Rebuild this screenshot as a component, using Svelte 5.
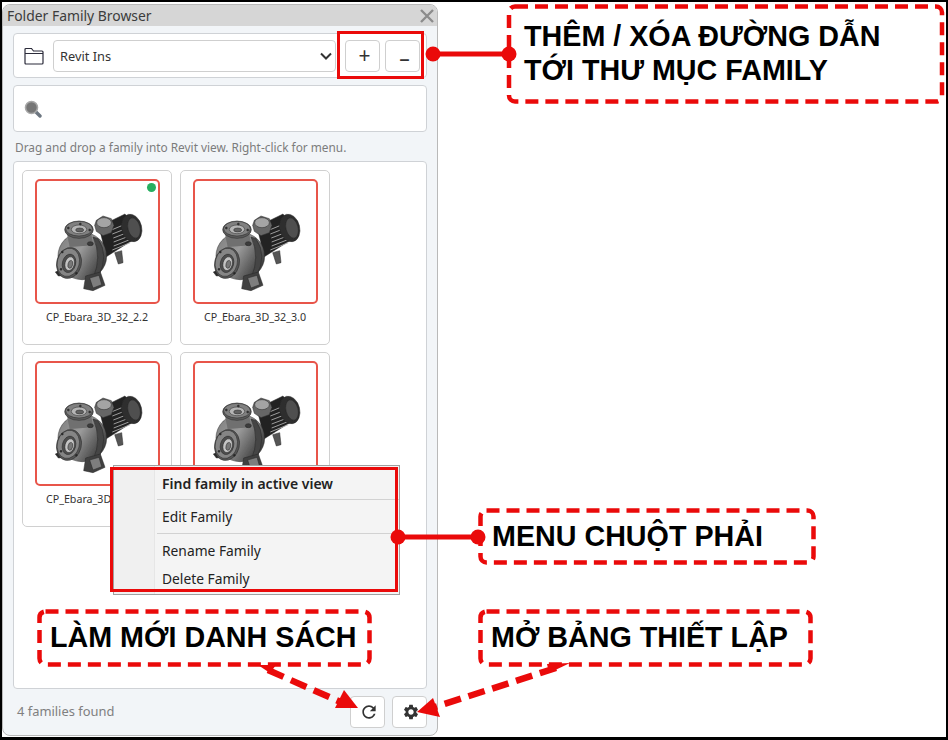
<script lang="ts">
  const families = [
    { name: 'CP_Ebara_3D_32_2.2', loaded: true },
    { name: 'CP_Ebara_3D_32_3.0', loaded: false },
    { name: 'CP_Ebara_3D_32_3.7', loaded: false },
    { name: 'CP_Ebara_3D_32_4.0', loaded: false }
  ];
</script>

<svg class="defs" width="0" height="0" aria-hidden="true">
  <defs>
    <linearGradient id="volute" x1="0" y1="0" x2="1" y2="0.6">
      <stop offset="0" stop-color="#7d7d7d" />
      <stop offset="0.5" stop-color="#9a9a9a" />
      <stop offset="1" stop-color="#3e3e3e" />
    </linearGradient>
    <filter id="soft" x="-5%" y="-5%" width="110%" height="110%">
      <feGaussianBlur stdDeviation="0.9" />
    </filter>
    <symbol id="pump" viewBox="0 0 330 300">
      <g filter="url(#soft)" stroke="#262626" stroke-width="1.5">
        <path d="M215 182 L236 176 L240 212 L226 216 Z" fill="#555" />
        <path d="M168 104 L246 66 L292 130 L190 194 Z" fill="#222" />
        <g stroke="#b0b0b0" stroke-width="2.6">
          <path d="M205 114 L258 92" />
          <path d="M208 126 L264 104" />
          <path d="M211 138 L268 116" />
          <path d="M212 150 L270 128" />
          <path d="M212 162 L268 140" />
          <path d="M208 174 L262 152" />
        </g>
        <ellipse cx="266" cy="108" rx="30" ry="42" transform="rotate(-14 266 108)" fill="#2e2e2e" />
        <ellipse cx="273" cy="108" rx="18" ry="31" transform="rotate(-14 273 108)" fill="#505050" />
        <path d="M160 85 L180 72 L205 80 L213 100 L205 122 L180 131 L160 118 L155 100 Z" fill="#666" />
        <ellipse cx="183" cy="92" rx="22" ry="15" fill="#a4a4a4" />
        <ellipse cx="118" cy="192" rx="73" ry="71" fill="url(#volute)" />
        <path d="M165 140 Q200 190 165 255 L150 258 Q178 195 150 135 Z" fill="#444" />
        <path d="M72 125 L145 125 L150 160 L80 165 Z" fill="#6f6f6f" stroke="none" />
        <ellipse cx="108" cy="113" rx="43" ry="26" fill="#5a5a5a" />
        <ellipse cx="108" cy="110" rx="40" ry="22" fill="#808080" />
        <ellipse cx="108" cy="112" rx="23" ry="13" fill="#b5b5b5" />
        <ellipse cx="110" cy="114" rx="12" ry="6" fill="#626262" />
        <circle cx="76" cy="108" r="3" fill="#333" />
        <circle cx="112" cy="96" r="3" fill="#333" />
        <circle cx="140" cy="114" r="3" fill="#333" />
        <ellipse cx="142" cy="155" rx="9" ry="6" fill="#3c3c3c" />
        <path d="M128 252 L172 240 L186 280 L150 296 L122 290 Z" fill="#404040" />
        <path d="M140 258 L168 250 L176 278 L150 288 Z" fill="#7e7e7e" />
        <path d="M37 240 L60 230 L72 250 L46 252 Z" fill="#2a2a2a" />
        <ellipse cx="78" cy="213" rx="37" ry="47" transform="rotate(14 78 213)" fill="#555" />
        <ellipse cx="76" cy="211" rx="33" ry="43" transform="rotate(14 76 211)" fill="#858585" />
        <ellipse cx="78" cy="214" rx="20" ry="28" transform="rotate(14 78 214)" fill="#4e4e4e" />
        <ellipse cx="80" cy="215" rx="14" ry="21" transform="rotate(14 80 215)" fill="#c4c4c4" />
        <ellipse cx="82" cy="217" rx="7" ry="12" transform="rotate(14 82 217)" fill="#787878" />
        <circle cx="58" cy="180" r="3" fill="#2a2a2a" />
        <circle cx="54" cy="232" r="3" fill="#2a2a2a" />
        <circle cx="100" cy="244" r="3" fill="#2a2a2a" />
      </g>
    </symbol>
  </defs>
</svg>

<div class="screen">
  <section class="window">
    <header class="titlebar">
      <span class="title">Folder Family Browser</span>
      <svg class="close" viewBox="0 0 14 14" width="14" height="14">
        <path d="M1 1 L13 13 M13 1 L1 13" stroke="#8c8c8c" stroke-width="2.4" fill="none" />
      </svg>
    </header>

    <div class="body">
      <div class="box path-row">
        <svg class="folder" viewBox="0 0 20 18" width="20" height="18">
          <path
            d="M1 16 V2.5 Q1 1.5 2 1.5 H7.5 L9.5 4 H18 Q19 4 19 5 V16 Q19 17 18 17 H2 Q1 17 1 16 Z M1 6.5 H19"
            fill="none"
            stroke="#2b2b3a"
            stroke-width="1.2"
          />
        </svg>
        <div class="select">
          <span>Revit Ins</span>
          <svg viewBox="0 0 12 8" width="12" height="8">
            <path d="M1 1.5 L6 6.5 L11 1.5" fill="none" stroke="#333" stroke-width="2" />
          </svg>
        </div>
        <button class="btn btn-op">+</button>
        <button class="btn btn-op btn-minus">–</button>
      </div>

      <div class="box search">
        <svg viewBox="0 0 18 18" width="18" height="18">
          <path d="M11 11 L16 16" stroke="#6d7680" stroke-width="3.4" stroke-linecap="round" />
          <circle cx="7.5" cy="7.5" r="6" fill="#767676" stroke="#a8a8a8" stroke-width="1.6" />
        </svg>
      </div>

      <p class="hint">Drag and drop a family into Revit view. Right-click for menu.</p>

      <div class="box list">
        {#each families as family}
          <article class="card">
            <div class="thumb">
              {#if family.loaded}<span class="dot"></span>{/if}
              <svg width="110" height="100"><use href="#pump" /></svg>
            </div>
            <div class="card-name">{family.name}</div>
          </article>
        {/each}
      </div>

      <footer class="footer">
        <span class="count">4 families found</span>
        <button class="btn" aria-label="Refresh">
          <svg class="tool-icon" viewBox="0 0 24 24" width="20" height="20">
            <path
              fill="#333"
              d="M17.65 6.35C16.2 4.9 14.21 4 12 4c-4.42 0-7.99 3.58-7.99 8s3.57 8 7.99 8c3.73 0 6.84-2.55 7.73-6h-2.08c-.82 2.33-3.04 4-5.65 4-3.31 0-6-2.69-6-6s2.69-6 6-6c1.66 0 3.14.69 4.22 1.78L13 11h7V4l-2.35 2.35z"
            />
          </svg>
        </button>
        <button class="btn" aria-label="Settings">
          <svg class="tool-icon" viewBox="0 0 24 24" width="18" height="18">
            <path
              fill="#333"
              d="M19.14 12.94c.04-.3.06-.61.06-.94 0-.32-.02-.64-.07-.94l2.03-1.58c.18-.14.23-.41.12-.61l-1.92-3.32c-.12-.22-.37-.29-.59-.22l-2.39.96c-.5-.38-1.03-.7-1.62-.94l-.36-2.54c-.04-.24-.24-.41-.48-.41h-3.84c-.24 0-.43.17-.47.41l-.36 2.54c-.59.24-1.13.57-1.62.94l-2.39-.96c-.22-.08-.47 0-.59.22L2.74 8.87c-.12.21-.08.47.12.61l2.03 1.58c-.05.3-.09.63-.09.94s.02.64.07.94l-2.03 1.58c-.18.14-.23.41-.12.61l1.92 3.32c.12.22.37.29.59.22l2.39-.96c.5.38 1.03.7 1.62.94l.36 2.54c.05.24.24.41.48.41h3.84c.24 0 .44-.17.47-.41l.36-2.54c.59-.24 1.13-.56 1.62-.94l2.39.96c.22.08.47 0 .59-.22l1.92-3.32c.12-.22.07-.47-.12-.61l-2.01-1.58zM12 15.6c-1.98 0-3.6-1.62-3.6-3.6s1.62-3.6 3.6-3.6 3.6 1.62 3.6 3.6-1.62 3.6-3.6 3.6z"
            />
          </svg>
        </button>
      </footer>
    </div>
  </section>

  <div class="menu">
    <div class="menu-item strong">Find family in active view</div>
    <div class="menu-sep"></div>
    <div class="menu-item">Edit Family</div>
    <div class="menu-sep"></div>
    <div class="menu-item">Rename Family</div>
    <div class="menu-item">Delete Family</div>
  </div>

  <!-- annotation layer drawn on top of the screenshot -->
  <svg class="marks" width="948" height="740" viewBox="0 0 948 740">
    <g fill="none" stroke="#ea0a0a">
      <rect x="338.5" y="32.5" width="84" height="45" stroke-width="3" />
      <rect x="111.5" y="468.5" width="285" height="122" stroke-width="3" />
      <g stroke-width="4.5" stroke-dasharray="13 7">
        <rect x="509" y="6.5" width="433" height="95" rx="6" />
        <rect x="480.5" y="510.5" width="333" height="52" rx="6" />
        <rect x="39.5" y="611.5" width="330" height="53" rx="6" />
        <rect x="480.5" y="611.5" width="330" height="53" rx="6" />
      </g>
      <path d="M433 54 H509 M398 537 H478" stroke-width="5" />
      <g stroke-width="6.5" stroke-dasharray="17 8">
        <path d="M268 670 L345 704" />
        <path d="M556 668 L435 707" />
      </g>
    </g>
    <g fill="#ea0a0a">
      <circle cx="433" cy="54" r="7.5" />
      <circle cx="509" cy="54" r="7.5" />
      <circle cx="398" cy="537" r="7.5" />
      <circle cx="478" cy="537" r="7.5" />
      <path d="M358 708 L344 690 L335 708 Z" />
      <path d="M417 712 L433 698 L440 717 Z" />
      <path d="M258 665 L276 665 L270 673 Z" />
      <path d="M570 663 L547 664 L549 673 Z" />
    </g>
  </svg>

  <div class="note note-path">THÊM / XÓA ĐƯỜNG DẪN<br />TỚI THƯ MỤC FAMILY</div>
  <div class="note note-menu">MENU CHUỘT PHẢI</div>
  <div class="note note-refresh">LÀM MỚI DANH SÁCH</div>
  <div class="note note-settings">MỞ BẢNG THIẾT LẬP</div>
</div>

<style>
  :global(body) {
    background: #fff;
  }

  .defs {
    position: absolute;
  }

  .screen {
    position: relative;
    box-sizing: border-box;
    width: 948px;
    height: 740px;
    border-style: solid;
    border-color: #000;
    border-width: 2px 2px 3px 2px;
    background: #fff;
    overflow: hidden;
    font-family: 'Noto Sans', sans-serif;
  }

  .window {
    box-sizing: border-box;
    display: flex;
    flex-direction: column;
    width: 436px;
    height: 732px;
    margin-top: 2px;
    background: #f2f5f8;
    border: 1px solid #b9b9b9;
    border-radius: 8px;
    overflow: hidden;
  }

  .titlebar {
    display: flex;
    align-items: center;
    justify-content: space-between;
    flex: none;
    height: 21px;
    padding: 0 3px 0 4px;
    background: #d6d6d6;
  }

  .title {
    font-size: 13.9px;
    color: #3c3c3c;
  }

  .body {
    display: flex;
    flex-direction: column;
    flex: 1;
    min-height: 0;
    padding: 7px 10px 0;
  }

  .box {
    box-sizing: border-box;
    background: #fff;
    border: 1px solid #cfd2d6;
    border-radius: 4px;
  }

  .path-row {
    display: flex;
    align-items: center;
    flex: none;
    height: 45px;
    padding: 0 6px 0 10px;
  }

  .folder {
    flex: none;
    margin-right: 9px;
  }

  .select {
    display: flex;
    align-items: center;
    justify-content: space-between;
    box-sizing: border-box;
    width: 285px;
    height: 32px;
    margin-right: 9px;
    padding: 0 3px 0 6px;
    border: 1px solid #cfcfcf;
    border-radius: 4px;
    font-size: 12.8px;
    color: #333;
  }

  .btn {
    display: flex;
    align-items: center;
    justify-content: center;
    flex: none;
    box-sizing: border-box;
    width: 35px;
    height: 32px;
    padding: 0;
    background: #fff;
    border: 1px solid #cfcfcf;
    border-radius: 4px;
    font-family: inherit;
    color: #333;
  }

  .btn-op {
    padding-left: 4px;
    font-size: 21px;
    line-height: 1;
  }

  .btn-op + .btn-op {
    margin-left: 5px;
  }

  .btn-minus {
    padding-top: 5px;
  }

  .search {
    display: flex;
    align-items: center;
    flex: none;
    height: 47px;
    margin-top: 7px;
    padding: 0 10px;
  }

  .hint {
    flex: none;
    margin: 0;
    height: 29px;
    padding-left: 2px;
    font-size: 11.85px;
    line-height: 31px;
    color: #7c7c7c;
  }

  .list {
    display: grid;
    grid-template-columns: repeat(auto-fill, 150px);
    grid-auto-rows: 175px;
    align-content: start;
    gap: 7px 8px;
    flex: 1;
    min-height: 0;
    padding: 8px;
  }

  .card {
    box-sizing: border-box;
    padding: 8px 12px;
    background: #fff;
    border: 1px solid #d0d0d0;
    border-radius: 5px;
  }

  .thumb {
    position: relative;
    display: flex;
    align-items: center;
    justify-content: center;
    box-sizing: border-box;
    width: 125px;
    height: 125px;
    border: 2px solid #e8554a;
    border-radius: 5px;
  }

  .dot {
    position: absolute;
    top: 2px;
    right: 2px;
    width: 9px;
    height: 9px;
    border-radius: 50%;
    background: #27ae60;
  }

  .card-name {
    margin-top: 5px;
    font-size: 10.7px;
    line-height: 16px;
    text-align: center;
    white-space: nowrap;
    color: #333;
  }

  .footer {
    display: flex;
    align-items: center;
    flex: 1;
    max-height: 46px;
    gap: 7px;
  }

  .tool-icon {
    margin-left: 3px;
  }

  .count {
    flex: 1;
    padding: 0 0 2px 4px;
    font-size: 12.9px;
    color: #808080;
  }

  .menu {
    position: absolute;
    left: 111px;
    top: 463px;
    box-sizing: border-box;
    width: 287px;
    height: 130px;
    padding-left: 41px;
    background: linear-gradient(to right, #f0f0f0 40px, #e6e6e6 40px, #e6e6e6 41px, #f4f4f4 41px);
    border: 1px solid #a0a0a0;
    font-size: 13.8px;
    color: #222;
  }

  .menu-item {
    display: flex;
    align-items: center;
    box-sizing: border-box;
    height: 28px;
    padding: 0 0 5px 7px;
    margin-top: 5px;
  }

  .menu-item + .menu-item {
    margin-top: 0;
  }

  .menu-item.strong {
    font-size: 14px;
    font-weight: 600;
    padding-bottom: 3px;
  }

  .menu-sep {
    height: 1px;
    margin-left: 2px;
    background: #d2d2d2;
  }

  .marks {
    position: absolute;
    left: -2px;
    top: -2px;
    pointer-events: none;
  }

  .note {
    position: absolute;
    font-family: 'Liberation Sans', Arial, sans-serif;
    font-weight: 700;
    font-size: 28.7px;
    line-height: 34px;
    white-space: nowrap;
    color: #000;
  }

  .note-path {
    left: 522px;
    top: 17px;
  }

  .note-menu {
    left: 490px;
    top: 517px;
  }

  .note-refresh {
    left: 48px;
    top: 618px;
  }

  .note-settings {
    left: 489px;
    top: 618px;
  }
</style>
